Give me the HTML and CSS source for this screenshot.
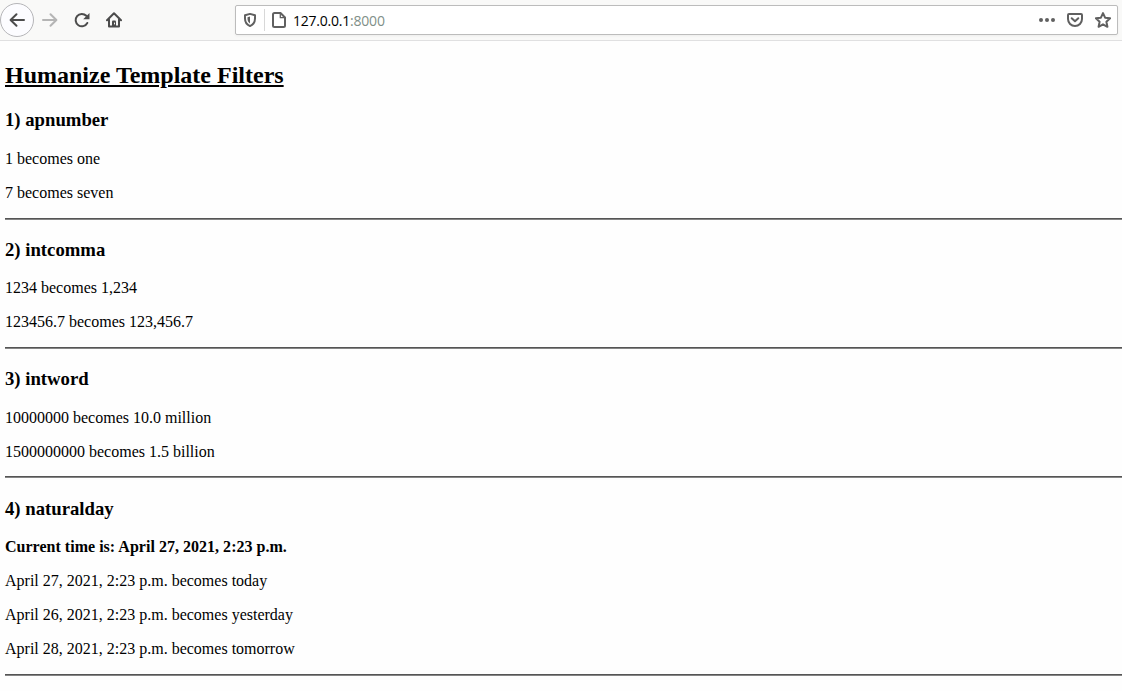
FILE: index.html
```html
<!DOCTYPE html>
<html lang="en">
<head>
<meta charset="utf-8">
<title>Humanize Template Filters</title>
<link rel="stylesheet" href="styles.css">
</head>
<body>
<header class="toolbar">
  <nav class="nav">
    <span class="back"><svg width="16" height="16" viewBox="0 0 16 16"><path d="M15 8H2M7.500 2.200L1.600 8l5.900 5.800"/></svg></span>
    <svg class="forward" width="16" height="16" viewBox="0 0 16 16"><path d="M1 8H14M8.500 2.200L14.400 8l-5.900 5.800"/></svg>
    <svg class="reload" width="16" height="16" viewBox="0 0 16 16"><path d="M13.300 11A6.200 6.200 0 1 1 12.300 3.800"/><path class="solid" d="M15.500 1v6.300H9.200z"/></svg>
    <svg class="home" width="16" height="16" viewBox="0 0 16 16"><path d="M1 8.300L8 1.300l7 7M3 7.500V14.500H13V7.500"/><path class="solid" d="M6 14V9.500q0-1 1-1h2q1 0 1 1V14z"/><path class="knob" d="M8.500 11v1"/></svg>
  </nav>
  <div class="urlbar">
    <svg class="shield" width="14" height="16" viewBox="0 0 14 16"><path d="M7 1.900L12 3.300V6.500C12 10.500 9.500 13 7 14.100C4.500 13 2 10.500 2 6.500V3.300z"/><path class="solid" d="M7 4.500V11.500C5.300 10.300 4.500 8.800 4.500 6.500V5.200z"/></svg>
    <span class="divider"></span>
    <svg class="page" width="14" height="16" viewBox="0 0 14 16"><path d="M2.500 1H8.500L13 5.500V13.500Q13 15 11.500 15H2.500Q1 15 1 13.500V2.500Q1 1 2.500 1z"/><path class="fold" d="M8.300 1V5.700H13"/></svg>
    <span class="address">127.0.0.1<span class="port">:8000</span></span>
    <svg class="more" width="16" height="16" viewBox="0 0 16 16"><circle cx="2" cy="8" r="2"/><circle cx="8" cy="8" r="2"/><circle cx="14" cy="8" r="2"/></svg>
    <svg class="pocket" width="16" height="16" viewBox="0 0 16 16"><path d="M2 2H14Q15 2 15 3V7A7 7 0 0 1 1 7V3Q1 2 2 2z"/><path d="M4.700 6.200L8 9.300l3.300-3.100"/></svg>
    <svg class="star" width="16" height="16" viewBox="0 0 16 16"><path d="M8 1.100L10.100 5.700L15.100 6.300L11.400 9.700L12.400 14.800L8 12.300L3.600 14.800L4.600 9.700L0.900 6.300L5.900 5.700z"/></svg>
  </div>
</header>
<main class="content">
  <h2>Humanize Template Filters</h2>
  <h3>1) apnumber</h3>
  <p>1 becomes one</p>
  <p>7 becomes seven</p>
  <hr>
  <h3>2) intcomma</h3>
  <p>1234 becomes 1,234</p>
  <p>123456.7 becomes 123,456.7</p>
  <hr>
  <h3>3) intword</h3>
  <p>10000000 becomes 10.0 million</p>
  <p>1500000000 becomes 1.5 billion</p>
  <hr>
  <h3>4) naturalday</h3>
  <p><b>Current time is: April 27, 2021, 2:23 p.m.</b></p>
  <p>April 27, 2021, 2:23 p.m. becomes today</p>
  <p>April 26, 2021, 2:23 p.m. becomes yesterday</p>
  <p>April 28, 2021, 2:23 p.m. becomes tomorrow</p>
  <hr>
</main>
</body>
</html>
```
FILE: styles.css
```css
html { overflow: hidden; }
body { margin: 0; background: #fefefe; color: #000; font: 16px/18px "Liberation Serif", "Times New Roman", serif; }
svg { display: block; flex: none; fill: none; stroke: #4c4c4c; stroke-width: 2; stroke-linejoin: round; stroke-linecap: round; }
.solid { fill: #4c4c4c; stroke: none; }
.toolbar { box-sizing: border-box; height: 41px; display: flex; align-items: flex-start; background: #f9f9f8; border-bottom: 1px solid #e0e0e1; }
.nav { width: 235px; height: 40px; display: flex; align-items: center; flex: none; }
.back { box-sizing: border-box; width: 34px; height: 34px; border: 1px solid #b5b5b8; border-radius: 50%; background: #fcfcff; display: flex; align-items: center; justify-content: center; }
.forward { margin-left: 8px; stroke: #b5b5b5; }
.reload { margin-left: 16px; }
.home { margin-left: 16px; }
.knob { stroke: #f9f9f8; stroke-width: 1; }
.urlbar { box-sizing: border-box; width: 883px; height: 30px; margin-top: 5px; padding-left: 7px; display: flex; align-items: center; background: #fff; border: 1px solid #bcbcbc; border-radius: 2px; box-shadow: 0 1px 3px #0000000d; }
.urlbar svg { stroke: #606060; }
.urlbar .solid { fill: #606060; stroke: none; }
.divider { width: 1px; height: 22px; margin: 0 7px; background: #d8d8d8; }
.urlbar .fold { stroke-width: 1.3; }
.address { margin-left: 7px; padding-top: 2px; flex: 1; font: 14px/18px "Open Sans", "Noto Sans", sans-serif; letter-spacing: -0.22px; }
.port { color: #7f8f88; }
.urlbar .more { fill: #606060; stroke: none; }
.pocket { margin-left: 12px; }
.star { margin: 0 6px 0 12px; }
.content { padding: 21px 0 0 5px; }
h2 { margin: 0 0 20px; font-size: 24px; line-height: 27px; text-decoration: underline; }
h3 { margin: 19.52px 0 18.12px; font-size: 18.72px; line-height: 22px; }
h2 + h3 { margin: 0 0 18.72px; }
p { margin: 16px 0; }
p + hr { margin-top: -0.2px; }
b { letter-spacing: 0.02px; }
hr { margin: 0 0 19.52px; height: 1px; border: 0; border-top: 1px solid #555; background: #858585; }
```
